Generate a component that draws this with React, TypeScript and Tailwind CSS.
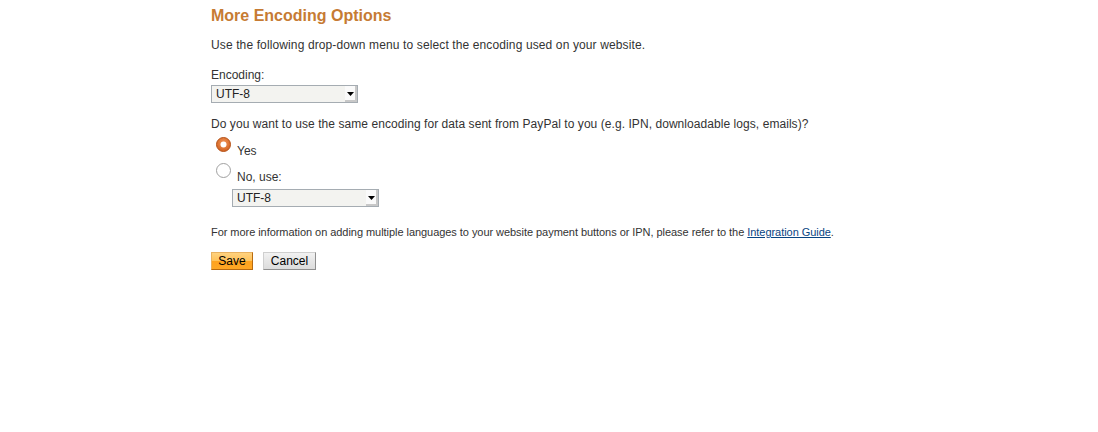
import { useState } from "react";

function FauxSelect({ value }: { value: string }) {
  return (
    <span className="relative block h-[18px] w-[147px]">
      <select
        defaultValue={value}
        className="block h-[18px] w-[147px] appearance-none border border-[#a5acb2] bg-[#f3f3f0] pl-[4px] text-[12px] leading-[16px] text-[#222] outline-none"
      >
        <option value="UTF-8">UTF-8</option>
        <option value="ISO-8859-1">ISO-8859-1</option>
        <option value="windows-1252">windows-1252</option>
      </select>
      {/* arrow button */}
      <span className="pointer-events-none absolute right-[1px] top-[1px] flex h-[16px] w-[12px] items-center justify-center border-b-2 border-r-2 border-[#c8c8c8] bg-[#fafafa]">
        <svg width="7" height="4" viewBox="0 0 7 4" className="mt-[1px]">
          <path d="M0 0h7L3.5 4z" fill="#000" />
        </svg>
      </span>
    </span>
  );
}

function Radio({ checked, onClick }: { checked: boolean; onClick: () => void }) {
  return (
    <button type="button" onClick={onClick} className="h-[15px] w-[15px] shrink-0">
      {checked ? (
        <svg width="15" height="15" viewBox="0 0 15 15">
          <defs>
            <radialGradient id="rg" cx="50%" cy="40%" r="60%">
              <stop offset="0%" stopColor="#f59a5c" />
              <stop offset="100%" stopColor="#d0601f" />
            </radialGradient>
          </defs>
          <circle cx="7.5" cy="7.5" r="7" fill="url(#rg)" stroke="#b5531a" strokeWidth="1" />
          <circle cx="7.5" cy="7.5" r="3" fill="#fff" />
        </svg>
      ) : (
        <svg width="15" height="15" viewBox="0 0 15 15">
          <circle cx="7.5" cy="7.5" r="7" fill="#fff" stroke="#a0a0a0" strokeWidth="1" />
        </svg>
      )}
    </button>
  );
}

export default function App() {
  const [same, setSame] = useState(true);

  return (
    <div className="h-[432px] w-full bg-white font-['Liberation_Sans',Arial,sans-serif] text-[#333]">
      <div className="mx-auto w-[676px] pt-[6px]">
        <h1 className="text-[16px] font-bold leading-[20px] text-[#c67b33]">More Encoding Options</h1>

        <p className="mt-[12px] text-[12px] leading-[15px] tracking-[0.12px]">
          Use the following drop-down menu to select the encoding used on your website.
        </p>

        <div className="mt-[15px]">
          <label className="block text-[12px] leading-[15px]">Encoding:</label>
          <div className="mt-[2px]">
            <FauxSelect value="UTF-8" />
          </div>
        </div>

        <p className="mt-[14px] text-[12px] leading-[15px] tracking-[0.06px]">
          Do you want to use the same encoding for data sent from PayPal to you (e.g. IPN, downloadable logs, emails)?
        </p>

        <div className="mt-[5px]">
          <div className="flex h-[26px] items-start pl-[5px]">
            <Radio checked={same} onClick={() => setSame(true)} />
            <span className="ml-[6px] pt-[7px] text-[12px] leading-[15px]">Yes</span>
          </div>
          <div className="flex h-[26px] items-start pl-[5px]">
            <Radio checked={!same} onClick={() => setSame(false)} />
            <span className="ml-[6px] pt-[7px] text-[12px] leading-[15px]">No, use:</span>
          </div>
          <div className="pl-[21px]">
            <FauxSelect value="UTF-8" />
          </div>
        </div>

        <p className="mt-[18px] text-[11px] leading-[14px] tracking-[-0.05px]">
          For more information on adding multiple languages to your website payment buttons or IPN, please refer to the{" "}
          <a href="#" className="text-[#084482] underline">
            Integration Guide
          </a>
          .
        </p>

        <div className="mt-[13px] flex gap-[10px]">
          <button
            type="button"
            className="h-[18px] w-[42px] border border-t-[#e8b160] border-l-[#e8b160] border-b-[#b86a10] border-r-[#b86a10] bg-[linear-gradient(to_bottom,#ffd27e_0%,#ffc25a_50%,#ffa31f_51%,#ffa724_100%)] text-[12px] leading-[16px] text-black"
          >
            Save
          </button>
          <button
            type="button"
            className="h-[18px] w-[53px] border border-t-[#cfcfcf] border-l-[#cfcfcf] border-b-[#8f8f8f] border-r-[#8f8f8f] bg-[linear-gradient(to_bottom,#f2f2f2_0%,#e6e6e6_50%,#dcdcdc_100%)] text-[12px] leading-[16px] text-black"
          >
            Cancel
          </button>
        </div>
      </div>
    </div>
  );
}
